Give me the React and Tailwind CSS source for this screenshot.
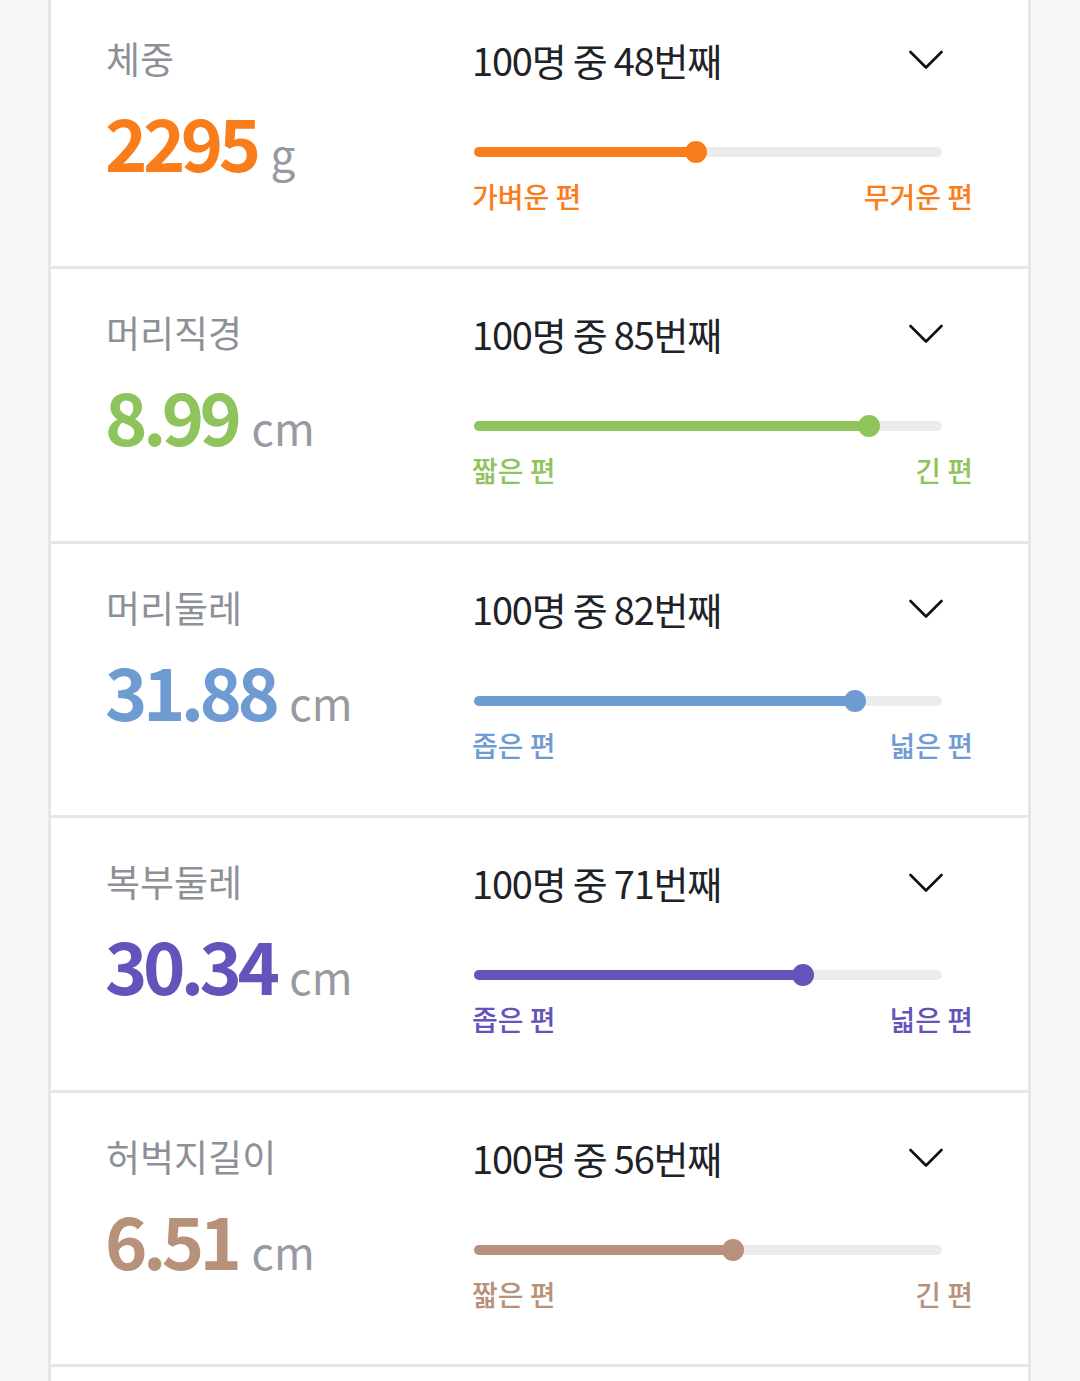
const rows = [
  { label: "체중", value: "2295", unit: "g", rank: 48, color: "#fa7d1c", left: "가벼운 편", right: "무거운 편" },
  { label: "머리직경", value: "8.99", unit: "cm", rank: 85, color: "#8fc35b", left: "짧은 편", right: "긴 편" },
  { label: "머리둘레", value: "31.88", unit: "cm", rank: 82, color: "#6f9bd3", left: "좁은 편", right: "넓은 편" },
  { label: "복부둘레", value: "30.34", unit: "cm", rank: 71, color: "#6453ba", left: "좁은 편", right: "넓은 편" },
  { label: "허벅지길이", value: "6.51", unit: "cm", rank: 56, color: "#b8917a", left: "짧은 편", right: "긴 편" },
];

function Chevron() {
  return (
    <svg width="34" height="20" viewBox="0 0 34 20" fill="none">
      <polyline points="1.5,2 17,17.5 32.5,2" stroke="#111" strokeWidth="2.6" strokeLinecap="round" strokeLinejoin="round" />
    </svg>
  );
}

function Row({ item }) {
  return (
    <div className="h-[274.5px] border-b-[3px] border-[#e6e6ea] flex pl-[54px]">
      <div className="w-[367px] pt-[43px]">
        <p className="text-[37px] leading-[40px] text-[#8e9097] pl-[1px]">{item.label}</p>
        <div className="flex items-baseline gap-[14px] mt-[23px]">
          <span className="text-[72px] leading-[80px] font-bold tracking-[-4.6px]" style={{ color: item.color }}>
            {item.value}
          </span>
          <span className="text-[44px] leading-[50px] text-[#979aa1]">{item.unit}</span>
        </div>
      </div>
      <div className="w-[501px] pt-[43px]">
        <div className="flex items-center justify-between pr-[30px]">
          <p className="text-[38px] leading-[44px] text-[#202227] tracking-[-1.2px]">
            100명 중 {item.rank}번째
          </p>
          <Chevron />
        </div>
        <div className="relative ml-[2px] mt-[65px] w-[468px] h-[10px] rounded-full bg-[#ececec]">
          <div
            className="absolute left-0 top-0 h-[10px] rounded-full"
            style={{ width: `calc(${item.rank}% - 3px)`, backgroundColor: item.color }}
          />
          <div
            className="absolute top-[-6px] w-[22px] h-[22px] rounded-full -translate-x-1/2"
            style={{ left: `calc(${item.rank}% - 3px)`, backgroundColor: item.color }}
          />
        </div>
        <div className="flex justify-between mt-[22px] text-[28px] leading-[34px] font-medium" style={{ color: item.color }}>
          <span>{item.left}</span>
          <span>{item.right}</span>
        </div>
      </div>
    </div>
  );
}

export default function App() {
  return (
    <div
      className="h-[1381px] overflow-hidden bg-[#f7f8fa]"
      style={{ fontFamily: '"Noto Sans CJK KR", "Noto Sans", sans-serif' }}
    >
      <div className="ml-[48px] w-[983px] -mt-[5.5px] border-x-[3px] border-[#e6e6ea] bg-white">
        {rows.map((item) => (
          <Row key={item.label} item={item} />
        ))}
        <div className="h-[40px]" />
      </div>
    </div>
  );
}
